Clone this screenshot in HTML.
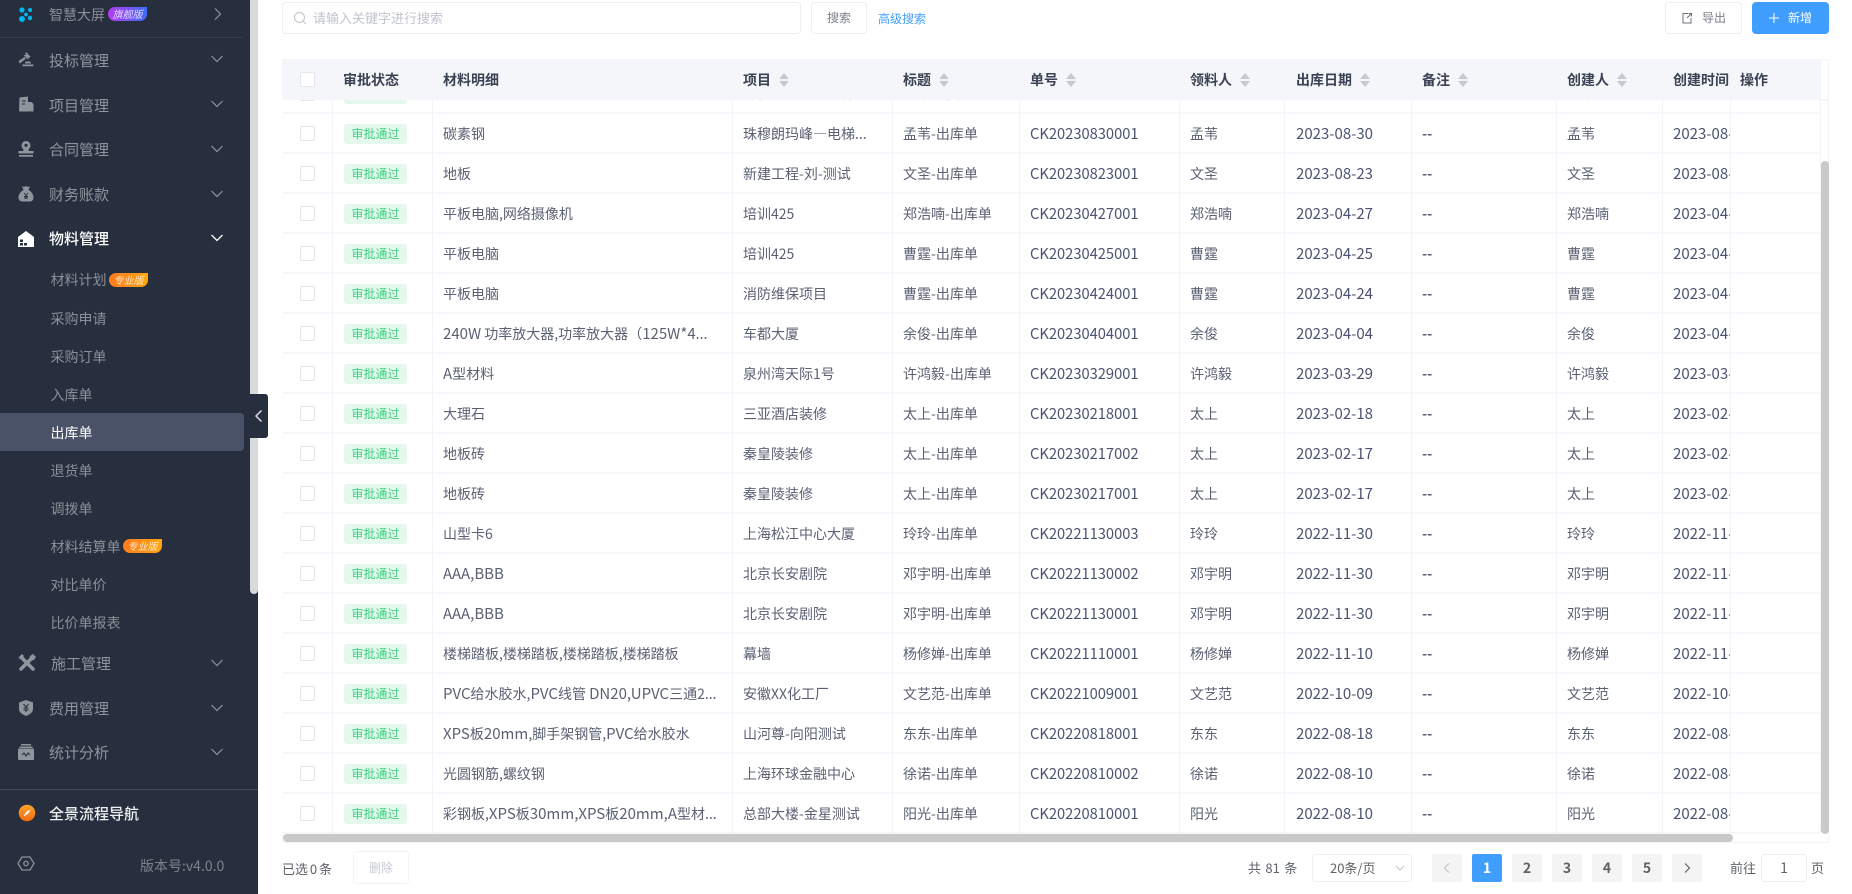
<!DOCTYPE html>
<html lang="zh-CN"><head><meta charset="utf-8"><title>出库单</title>
<style>
*{box-sizing:border-box}
html,body{margin:0;padding:0;width:1852px;height:894px;overflow:hidden;background:#fff;font-family:"Liberation Sans","Noto Sans CJK SC",sans-serif}
body,td,th,div,span{font-family:"Noto Sans CJK SC","Liberation Sans",sans-serif}
#side{position:absolute;left:0;top:0;width:258px;height:894px;background:#272f3e;overflow:hidden}
.mi{position:absolute;left:49px;height:24px;line-height:24px;font-size:15px;color:#8f959d;white-space:nowrap}
.si{position:absolute;left:50.5px;height:24px;line-height:24px;font-size:14px;color:#8a9098;white-space:nowrap}
.ic{position:absolute;left:16px;width:20px;height:20px}
.ch{position:absolute;left:209px;width:16px;height:16px}
.bd{position:absolute;width:39px;height:14px;border-radius:7px 0 7px 7px;color:#fff;font-size:10px;line-height:14px;text-align:center;font-style:italic}
.bo{background:linear-gradient(90deg,#ff7a1f,#ffa60f);color:#ffe9cf}
.tb{position:absolute;background:#fff;border:1px solid #eceef2;border-radius:4px;font-size:12px;color:#7b7f87;text-align:center;line-height:30px}
table{border-collapse:separate;border-spacing:0;table-layout:fixed;position:absolute;left:0;width:1539px}
td,th{padding:0 0 0 10px;white-space:nowrap;overflow:hidden;font-weight:400;text-align:left;border-right:1px solid #f3f4f9;font-size:14px}
#hd th{height:41px;background:#f5f6fa;color:#3b4254;font-weight:700;font-size:14px}
#bd td{height:40px;padding-top:1px;border-bottom:2px solid #f6f7fb;color:#5b6073;background:#fff}
#bd td.n{font-size:15px;color:#4b5371}
#bd td:nth-child(6){font-size:14.7px}
#bd td:nth-child(8){padding-left:11px}
#bd td.k{font-weight:700;color:#5b6073}
em{font-style:normal;font-size:15px}
.cb{display:block;width:15px;height:15px;border:1px solid #e4e6ec;border-radius:2px;background:#fff;margin-left:8px}
.tg{display:inline-block;width:63px;height:20.5px;line-height:20px;background:#e5f8ed;color:#3fce7f;font-size:12px;text-align:center;border-radius:3px;margin-left:1px;vertical-align:middle}
.s{display:inline-block;width:10px;height:14px;margin-left:8px;vertical-align:-2px;position:relative}
.s:before,.s:after{content:"";position:absolute;left:0;border-left:5px solid transparent;border-right:5px solid transparent}
.s:before{top:0;border-bottom:6px solid #c6c9d0}
.s:after{bottom:0;border-top:6px solid #c6c9d0}
.pg{position:absolute;top:854px;width:30px;height:28px;background:#f4f4f5;border-radius:2px;text-align:center;line-height:28px;font-size:14px;font-weight:700;color:#606266}
.ft{position:absolute;font-size:13px;color:#5f6368;line-height:28px;top:854px;white-space:nowrap}
</style></head><body>
<div id="side">
<svg class="ic" style="top:5px;left:16px" viewBox="0 0 20 20"><g fill="#00b4ee"><circle cx="6" cy="5" r="2.6"/><circle cx="14" cy="5" r="2"/><circle cx="10" cy="9.5" r="1.9"/><circle cx="6" cy="14" r="3"/><circle cx="14" cy="13" r="2.2"/></g></svg>
<div class="si" style="left:49px;top:3px">智慧大屏</div>
<div class="bd" style="left:108px;top:7px;background:linear-gradient(90deg,#b53cf0,#3f6df5);color:#e8d8ff">旗舰版</div>
<svg class="ch" style="top:6px" viewBox="0 0 16 16"><path d="M6 2.5L11.5 8 6 13.5" fill="none" stroke="#8f959d" stroke-width="1.2"/></svg>
<div style="position:absolute;left:0;top:37px;width:243px;height:1px;background:#343c4b"></div>

<svg class="ic" style="top:50px" viewBox="0 0 20 20"><path d="M9 3.2l1.3-1 4.3 4.6-1.3 1.1zM7.4 5l4.1-.2 1.2 1.3-.5 3.7zM2.5 11l6-4 1.4 1.6-6 4.9zM9.6 11.5h4.6l.9 2H8.8zM6.4 14.5h11v1.7h-11z" fill="#8f959d"/></svg>
<div class="mi" style="top:49px">投标管理</div>
<svg class="ch" style="top:51px" viewBox="0 0 16 16"><path d="M2.5 5L8 10.5 13.5 5" fill="none" stroke="#8f959d" stroke-width="1.2"/></svg>

<svg class="ic" style="top:94px" viewBox="0 0 20 20"><path d="M3.5 3.5L12 2.5V8h3.5l2 2v7.5H3z" fill="#8f959d"/><path d="M6 7h4M6 10h3" stroke="#272f3e" stroke-width="1"/></svg>
<div class="mi" style="top:94px">项目管理</div>
<svg class="ch" style="top:96px" viewBox="0 0 16 16"><path d="M2.5 5L8 10.5 13.5 5" fill="none" stroke="#8f959d" stroke-width="1.2"/></svg>

<svg class="ic" style="top:139px" viewBox="0 0 20 20"><path d="M10 2a4.5 4.5 0 0 1 3 7.8c-.6.6-.6 1.5 0 2.2H17.500v2.500H2.500V12H7c.6-.7.6-1.600 0-2.200A4.500 4.500 0 0 1 10 2z" fill="#8f959d"/><circle cx="10" cy="6.300" r="1.600" fill="#272f3e"/><rect x="3" y="16" width="14" height="1.700" fill="#8f959d"/></svg>
<div class="mi" style="top:138px">合同管理</div>
<svg class="ch" style="top:141px" viewBox="0 0 16 16"><path d="M2.5 5L8 10.5 13.500 5" fill="none" stroke="#8f959d" stroke-width="1.2"/></svg>

<svg class="ic" style="top:184px" viewBox="0 0 20 20"><path d="M6 2l2 1 2-1 2 1 2-1-1.500 4c3 1.500 5 4.500 5 7.500 0 3-2 4-4 4H6.500c-2 0-4-1-4-4 0-3 2-6 5-7.500z" fill="#8f959d"/><path d="M8 9l2 2.500L12 9M10 11.500V15M8 12.500h4M8 14h4" stroke="#272f3e" stroke-width=".9" fill="none"/></svg>
<div class="mi" style="top:183px">财务账款</div>
<svg class="ch" style="top:186px" viewBox="0 0 16 16"><path d="M2.5 5L8 10.5 13.500 5" fill="none" stroke="#8f959d" stroke-width="1.2"/></svg>

<svg class="ic" style="top:229px" viewBox="0 0 20 20"><path d="M2 8l8-6 8 6v10H2z" fill="#fff"/><path d="M4 10.500h3v2.500H4zM4 14h3v2.500H4zM8 14h3v2.500H8z" fill="#272f3e"/></svg>
<div class="mi" style="top:227px;color:#fff;font-weight:500">物料管理</div>
<svg class="ch" style="top:230px" viewBox="0 0 16 16"><path d="M2.5 5L8 10.5 13.500 5" fill="none" stroke="#fff" stroke-width="1.300"/></svg>

<div class="si" style="top:268px">材料计划</div>
<div class="bd bo" style="left:109px;top:273px">专业版</div>
<div class="si" style="top:307px">采购申请</div>
<div class="si" style="top:345px">采购订单</div>
<div class="si" style="top:383px">入库单</div>
<div style="position:absolute;left:0;top:413px;width:244px;height:38px;background:#4a5268;border-radius:0 4px 4px 0"></div>
<div class="si" style="top:421px;color:#fff">出库单</div>
<div class="si" style="top:459px">退货单</div>
<div class="si" style="top:497px">调拨单</div>
<div class="si" style="top:535px">材料结算单</div>
<div class="bd bo" style="left:123px;top:539px">专业版</div>
<div class="si" style="top:573px">对比单价</div>
<div class="si" style="top:611px">比价单报表</div>

<svg class="ic" style="top:653px;left:17px" viewBox="0 0 20 20"><path d="M4.500 4.500L16 16" stroke="#8f959d" stroke-width="3.600" stroke-linecap="round"/><path d="M15.500 4.500L4 16" stroke="#8f959d" stroke-width="3.600" stroke-linecap="round"/><path d="M1.500 4.500L5 1l2 2-3.500 3.500zM13 3l3-2 3 3-2 3-2.500.5-2-2z" fill="#8f959d"/></svg>
<div class="mi" style="top:652px;left:51px">施工管理</div>
<svg class="ch" style="top:655px" viewBox="0 0 16 16"><path d="M2.5 5L8 10.5 13.500 5" fill="none" stroke="#8f959d" stroke-width="1.2"/></svg>

<svg class="ic" style="top:698px" viewBox="0 0 20 20"><path d="M10 2l7 2.500v6.500c0 3.500-3.500 5.500-7 7-3.500-1.500-7-3.500-7-7V4.500z" fill="#8f959d"/><path d="M7.500 6L10 9l2.500-3M10 9v5M7.500 10h5M7.500 12h5" stroke="#272f3e" stroke-width="1" fill="none"/></svg>
<div class="mi" style="top:697px">费用管理</div>
<svg class="ch" style="top:700px" viewBox="0 0 16 16"><path d="M2.5 5L8 10.5 13.500 5" fill="none" stroke="#8f959d" stroke-width="1.2"/></svg>

<svg class="ic" style="top:742px" viewBox="0 0 20 20"><path d="M5 2h10v1.500H5zM3.500 4.500h13V6h-13z" fill="#8f959d"/><rect x="2" y="6.500" width="16" height="11.500" rx="1" fill="#8f959d"/><path d="M6 13l2-2 2 3 2-3 2 2" stroke="#272f3e" stroke-width="1.100" fill="none"/></svg>
<div class="mi" style="top:741px">统计分析</div>
<svg class="ch" style="top:744px" viewBox="0 0 16 16"><path d="M2.5 5L8 10.5 13.500 5" fill="none" stroke="#8f959d" stroke-width="1.2"/></svg>

<div style="position:absolute;left:0;top:789px;width:258px;height:1px;background:#414959"></div>
<svg class="ic" style="top:803px;left:17px" viewBox="0 0 20 20"><defs><linearGradient id="g" x1="0" y1="0" x2="0" y2="1"><stop offset="0" stop-color="#ffa32a"/><stop offset="1" stop-color="#ee6a12"/></linearGradient></defs><circle cx="10" cy="10" r="8.300" fill="url(#g)"/><path d="M13.500 6.500l-2.500 4.500-4.500 2.500 2.500-4.500z" fill="#fff"/></svg>
<div class="mi" style="top:802px;color:#eef0f2;font-weight:500">全景流程导航</div>
<svg class="ic" style="top:854px" viewBox="0 0 20 20"><path d="M6 3h8l4 6.500-4 6.500H6L2 9.500z" fill="none" stroke="#8a9098" stroke-width="1.300" stroke-linejoin="round"/><circle cx="10" cy="9.500" r="2.200" fill="none" stroke="#8a9098" stroke-width="1.300"/></svg>
<div class="si" style="left:140px;top:854px;color:#7e848c">版本号:v4.0.0</div>

<div style="position:absolute;left:250px;top:0;width:8px;height:594px;background:#d8d9dc;border-radius:0 0 4px 4px"></div>
</div>
<div style="position:absolute;left:250px;top:394px;width:18px;height:44px;background:#272f3e;border-radius:0 3px 3px 0"></div>
<svg style="position:absolute;left:252px;top:408px" width="14" height="16" viewBox="0 0 14 16"><path d="M9.500 2.500L4 8l5.500 5.500" fill="none" stroke="#e4e6ea" stroke-width="1.400"/></svg>

<div class="tb" style="left:282px;top:2px;width:519px;height:32px;text-align:left;padding-left:30px;font-size:13px;color:#c0c4cc">请输入关键字进行搜索</div>
<svg style="position:absolute;left:293px;top:11px" width="15" height="15" viewBox="0 0 15 15"><circle cx="6.500" cy="6.500" r="5" fill="none" stroke="#c0c4cc" stroke-width="1"/><path d="M10 10l3 3" stroke="#c0c4cc"/></svg>
<div class="tb" style="left:811px;top:2px;width:56px;height:32px">搜索</div>
<div style="position:absolute;left:878px;top:8px;font-size:12px;line-height:22px;color:#409eff">高级搜索</div>
<div class="tb" style="left:1665px;top:2px;width:77px;height:32px;text-align:left;padding-left:36px">导出</div>
<svg style="position:absolute;left:1680px;top:11px" width="14" height="14" viewBox="0 0 14 14"><path d="M8 2.500H3v9.500h8V7M7 7l4.500-4.500M8.500 2.500h3v3" fill="none" stroke="#6b7078" stroke-width="1"/></svg>
<div style="position:absolute;left:1752px;top:2px;width:77px;height:32px;background:#409eff;border-radius:4px;color:#fff;font-size:12px;line-height:32px;padding-left:36px">新增</div>
<svg style="position:absolute;left:1768px;top:12px" width="12" height="12" viewBox="0 0 12 12"><path d="M6 1v10M1 6h10" stroke="#fff" stroke-width="1"/></svg>

<div style="position:absolute;left:282px;top:59px;width:1547px;height:784px;border:1px solid #f3f4f8"></div>
<div style="position:absolute;left:1821px;top:99px;width:8px;height:2px;background:#f3f4f8"></div>
<div style="position:absolute;left:282px;top:59px;width:1539px;height:41px;overflow:hidden">
<table id="hd" style="top:0"><colgroup><col style="width:51px"><col style="width:100px"><col style="width:300px"><col style="width:160px"><col style="width:127px"><col style="width:160px"><col style="width:105px"><col style="width:127px"><col style="width:145px"><col style="width:106px"><col style="width:68px"><col></colgroup>
<tr><th><span class="cb" style="background:#fff"></span></th><th style="padding-left:10px">审批状态</th><th>材料明细</th><th>项目<i class="s"></i></th><th>标题<i class="s"></i></th><th>单号<i class="s"></i></th><th>领料人<i class="s"></i></th><th style="padding-left:11px">出库日期<i class="s"></i></th><th>备注<i class="s"></i></th><th>创建人<i class="s"></i></th><th>创建时间</th><th style="padding-left:9px">操作</th></tr></table>
</div>
<div style="position:absolute;left:282px;top:100px;width:1539px;height:734px;overflow:hidden">
<table id="bd" style="top:-26px"><colgroup><col style="width:51px"><col style="width:100px"><col style="width:300px"><col style="width:160px"><col style="width:127px"><col style="width:160px"><col style="width:105px"><col style="width:127px"><col style="width:145px"><col style="width:106px"><col style="width:68px"><col></colgroup>
<tr><td><span class="cb"></span></td><td><span class="tg">审批通过</span></td><td>碳素钢</td><td>珠穆朗玛峰—电梯...</td><td>孟苇-出库单</td><td class="n">CK20230831001</td><td>孟苇</td><td class="n">2023-08-31</td><td class="k">--</td><td>孟苇</td><td class="n">2023-08-31</td><td></td></tr>
<tr><td><span class="cb"></span></td><td><span class="tg">审批通过</span></td><td>碳素钢</td><td>珠穆朗玛峰—电梯...</td><td>孟苇-出库单</td><td class="n">CK20230830001</td><td>孟苇</td><td class="n">2023-08-30</td><td class="k">--</td><td>孟苇</td><td class="n">2023-08-30</td><td></td></tr>
<tr><td><span class="cb"></span></td><td><span class="tg">审批通过</span></td><td>地板</td><td>新建工程-刘-测试</td><td>文圣-出库单</td><td class="n">CK20230823001</td><td>文圣</td><td class="n">2023-08-23</td><td class="k">--</td><td>文圣</td><td class="n">2023-08-23</td><td></td></tr>
<tr><td><span class="cb"></span></td><td><span class="tg">审批通过</span></td><td>平板电脑,网络摄像机</td><td>培训425</td><td>郑浩喃-出库单</td><td class="n">CK20230427001</td><td>郑浩喃</td><td class="n">2023-04-27</td><td class="k">--</td><td>郑浩喃</td><td class="n">2023-04-27</td><td></td></tr>
<tr><td><span class="cb"></span></td><td><span class="tg">审批通过</span></td><td>平板电脑</td><td>培训425</td><td>曹霆-出库单</td><td class="n">CK20230425001</td><td>曹霆</td><td class="n">2023-04-25</td><td class="k">--</td><td>曹霆</td><td class="n">2023-04-25</td><td></td></tr>
<tr><td><span class="cb"></span></td><td><span class="tg">审批通过</span></td><td>平板电脑</td><td>消防维保项目</td><td>曹霆-出库单</td><td class="n">CK20230424001</td><td>曹霆</td><td class="n">2023-04-24</td><td class="k">--</td><td>曹霆</td><td class="n">2023-04-24</td><td></td></tr>
<tr><td><span class="cb"></span></td><td><span class="tg">审批通过</span></td><td><em>240W</em> 功率放大器,功率放大器（<em>125W*4</em>...</td><td>车都大厦</td><td>余俊-出库单</td><td class="n">CK20230404001</td><td>余俊</td><td class="n">2023-04-04</td><td class="k">--</td><td>余俊</td><td class="n">2023-04-04</td><td></td></tr>
<tr><td><span class="cb"></span></td><td><span class="tg">审批通过</span></td><td><em>A</em>型材料</td><td>泉州湾天际1号</td><td>许鸿毅-出库单</td><td class="n">CK20230329001</td><td>许鸿毅</td><td class="n">2023-03-29</td><td class="k">--</td><td>许鸿毅</td><td class="n">2023-03-29</td><td></td></tr>
<tr><td><span class="cb"></span></td><td><span class="tg">审批通过</span></td><td>大理石</td><td>三亚酒店装修</td><td>太上-出库单</td><td class="n">CK20230218001</td><td>太上</td><td class="n">2023-02-18</td><td class="k">--</td><td>太上</td><td class="n">2023-02-18</td><td></td></tr>
<tr><td><span class="cb"></span></td><td><span class="tg">审批通过</span></td><td>地板砖</td><td>秦皇陵装修</td><td>太上-出库单</td><td class="n">CK20230217002</td><td>太上</td><td class="n">2023-02-17</td><td class="k">--</td><td>太上</td><td class="n">2023-02-17</td><td></td></tr>
<tr><td><span class="cb"></span></td><td><span class="tg">审批通过</span></td><td>地板砖</td><td>秦皇陵装修</td><td>太上-出库单</td><td class="n">CK20230217001</td><td>太上</td><td class="n">2023-02-17</td><td class="k">--</td><td>太上</td><td class="n">2023-02-17</td><td></td></tr>
<tr><td><span class="cb"></span></td><td><span class="tg">审批通过</span></td><td>山型卡6</td><td>上海松江中心大厦</td><td>玲玲-出库单</td><td class="n">CK20221130003</td><td>玲玲</td><td class="n">2022-11-30</td><td class="k">--</td><td>玲玲</td><td class="n">2022-11-30</td><td></td></tr>
<tr><td><span class="cb"></span></td><td><span class="tg">审批通过</span></td><td><em>AAA,BBB</em></td><td>北京长安剧院</td><td>邓宇明-出库单</td><td class="n">CK20221130002</td><td>邓宇明</td><td class="n">2022-11-30</td><td class="k">--</td><td>邓宇明</td><td class="n">2022-11-30</td><td></td></tr>
<tr><td><span class="cb"></span></td><td><span class="tg">审批通过</span></td><td><em>AAA,BBB</em></td><td>北京长安剧院</td><td>邓宇明-出库单</td><td class="n">CK20221130001</td><td>邓宇明</td><td class="n">2022-11-30</td><td class="k">--</td><td>邓宇明</td><td class="n">2022-11-30</td><td></td></tr>
<tr><td><span class="cb"></span></td><td><span class="tg">审批通过</span></td><td>楼梯踏板,楼梯踏板,楼梯踏板,楼梯踏板</td><td>幕墙</td><td>杨修婵-出库单</td><td class="n">CK20221110001</td><td>杨修婵</td><td class="n">2022-11-10</td><td class="k">--</td><td>杨修婵</td><td class="n">2022-11-10</td><td></td></tr>
<tr><td><span class="cb"></span></td><td><span class="tg">审批通过</span></td><td><em>PVC</em>给水胶水,<em>PVC</em>线管 <em>DN20,UPVC</em>三通2...</td><td>安徽XX化工厂</td><td>文艺范-出库单</td><td class="n">CK20221009001</td><td>文艺范</td><td class="n">2022-10-09</td><td class="k">--</td><td>文艺范</td><td class="n">2022-10-09</td><td></td></tr>
<tr><td><span class="cb"></span></td><td><span class="tg">审批通过</span></td><td><em>XPS</em>板<em>20mm</em>,脚手架钢管,<em>PVC</em>给水胶水</td><td>山河尊-向阳测试</td><td>东东-出库单</td><td class="n">CK20220818001</td><td>东东</td><td class="n">2022-08-18</td><td class="k">--</td><td>东东</td><td class="n">2022-08-18</td><td></td></tr>
<tr><td><span class="cb"></span></td><td><span class="tg">审批通过</span></td><td>光圆钢筋,螺纹钢</td><td>上海环球金融中心</td><td>徐诺-出库单</td><td class="n">CK20220810002</td><td>徐诺</td><td class="n">2022-08-10</td><td class="k">--</td><td>徐诺</td><td class="n">2022-08-10</td><td></td></tr>
<tr><td><span class="cb"></span></td><td><span class="tg">审批通过</span></td><td>彩钢板,<em>XPS</em>板<em>30mm,XPS</em>板<em>20mm,A</em>型材...</td><td>总部大楼-金星测试</td><td>阳光-出库单</td><td class="n">CK20220810001</td><td>阳光</td><td class="n">2022-08-10</td><td class="k">--</td><td>阳光</td><td class="n">2022-08-10</td><td></td></tr>
</table></div>
<div style="position:absolute;left:283px;top:834px;width:1450px;height:8px;background:#c9c9c9;border-radius:4px"></div>
<div style="position:absolute;left:1821px;top:161px;width:7.500px;height:673px;background:#c9c9c9;border-radius:4px"></div>

<div class="ft" style="left:282px;top:855px;word-spacing:-1px">已选 0 条</div>
<div class="tb" style="left:353px;top:851px;width:56px;height:33px;line-height:31px;color:#c8cbd2;border-color:#f2f3f5">删除</div>
<div class="ft" style="left:1248px;word-spacing:1.500px">共 81 条</div>
<div class="tb" style="left:1312px;top:854px;width:100px;height:28px;line-height:26px;text-align:left;padding-left:17px;font-size:13px;color:#606266">20条/页</div>
<svg style="position:absolute;left:1394px;top:862px" width="12" height="12" viewBox="0 0 12 12"><path d="M2 4l4 4 4-4" fill="none" stroke="#c0c4cc"/></svg>
<div class="pg" style="left:1432px"><svg width="12" height="12" viewBox="0 0 12 12" style="vertical-align:-1px"><path d="M8 1.500L3.500 6 8 10.500" fill="none" stroke="#c0c4cc" stroke-width="1.200"/></svg></div>
<div class="pg" style="left:1472px;background:#409eff;color:#fff">1</div>
<div class="pg" style="left:1512px">2</div>
<div class="pg" style="left:1552px">3</div>
<div class="pg" style="left:1592px">4</div>
<div class="pg" style="left:1632px">5</div>
<div class="pg" style="left:1672px"><svg width="12" height="12" viewBox="0 0 12 12" style="vertical-align:-1px"><path d="M4 1.500L8.500 6 4 10.500" fill="none" stroke="#606266" stroke-width="1.200"/></svg></div>
<div class="ft" style="left:1730px">前往</div>
<div class="tb" style="left:1761px;top:854px;width:46px;height:28px;line-height:26px;font-size:14px;color:#606266">1</div>
<div class="ft" style="left:1811px">页</div>
</body></html>
